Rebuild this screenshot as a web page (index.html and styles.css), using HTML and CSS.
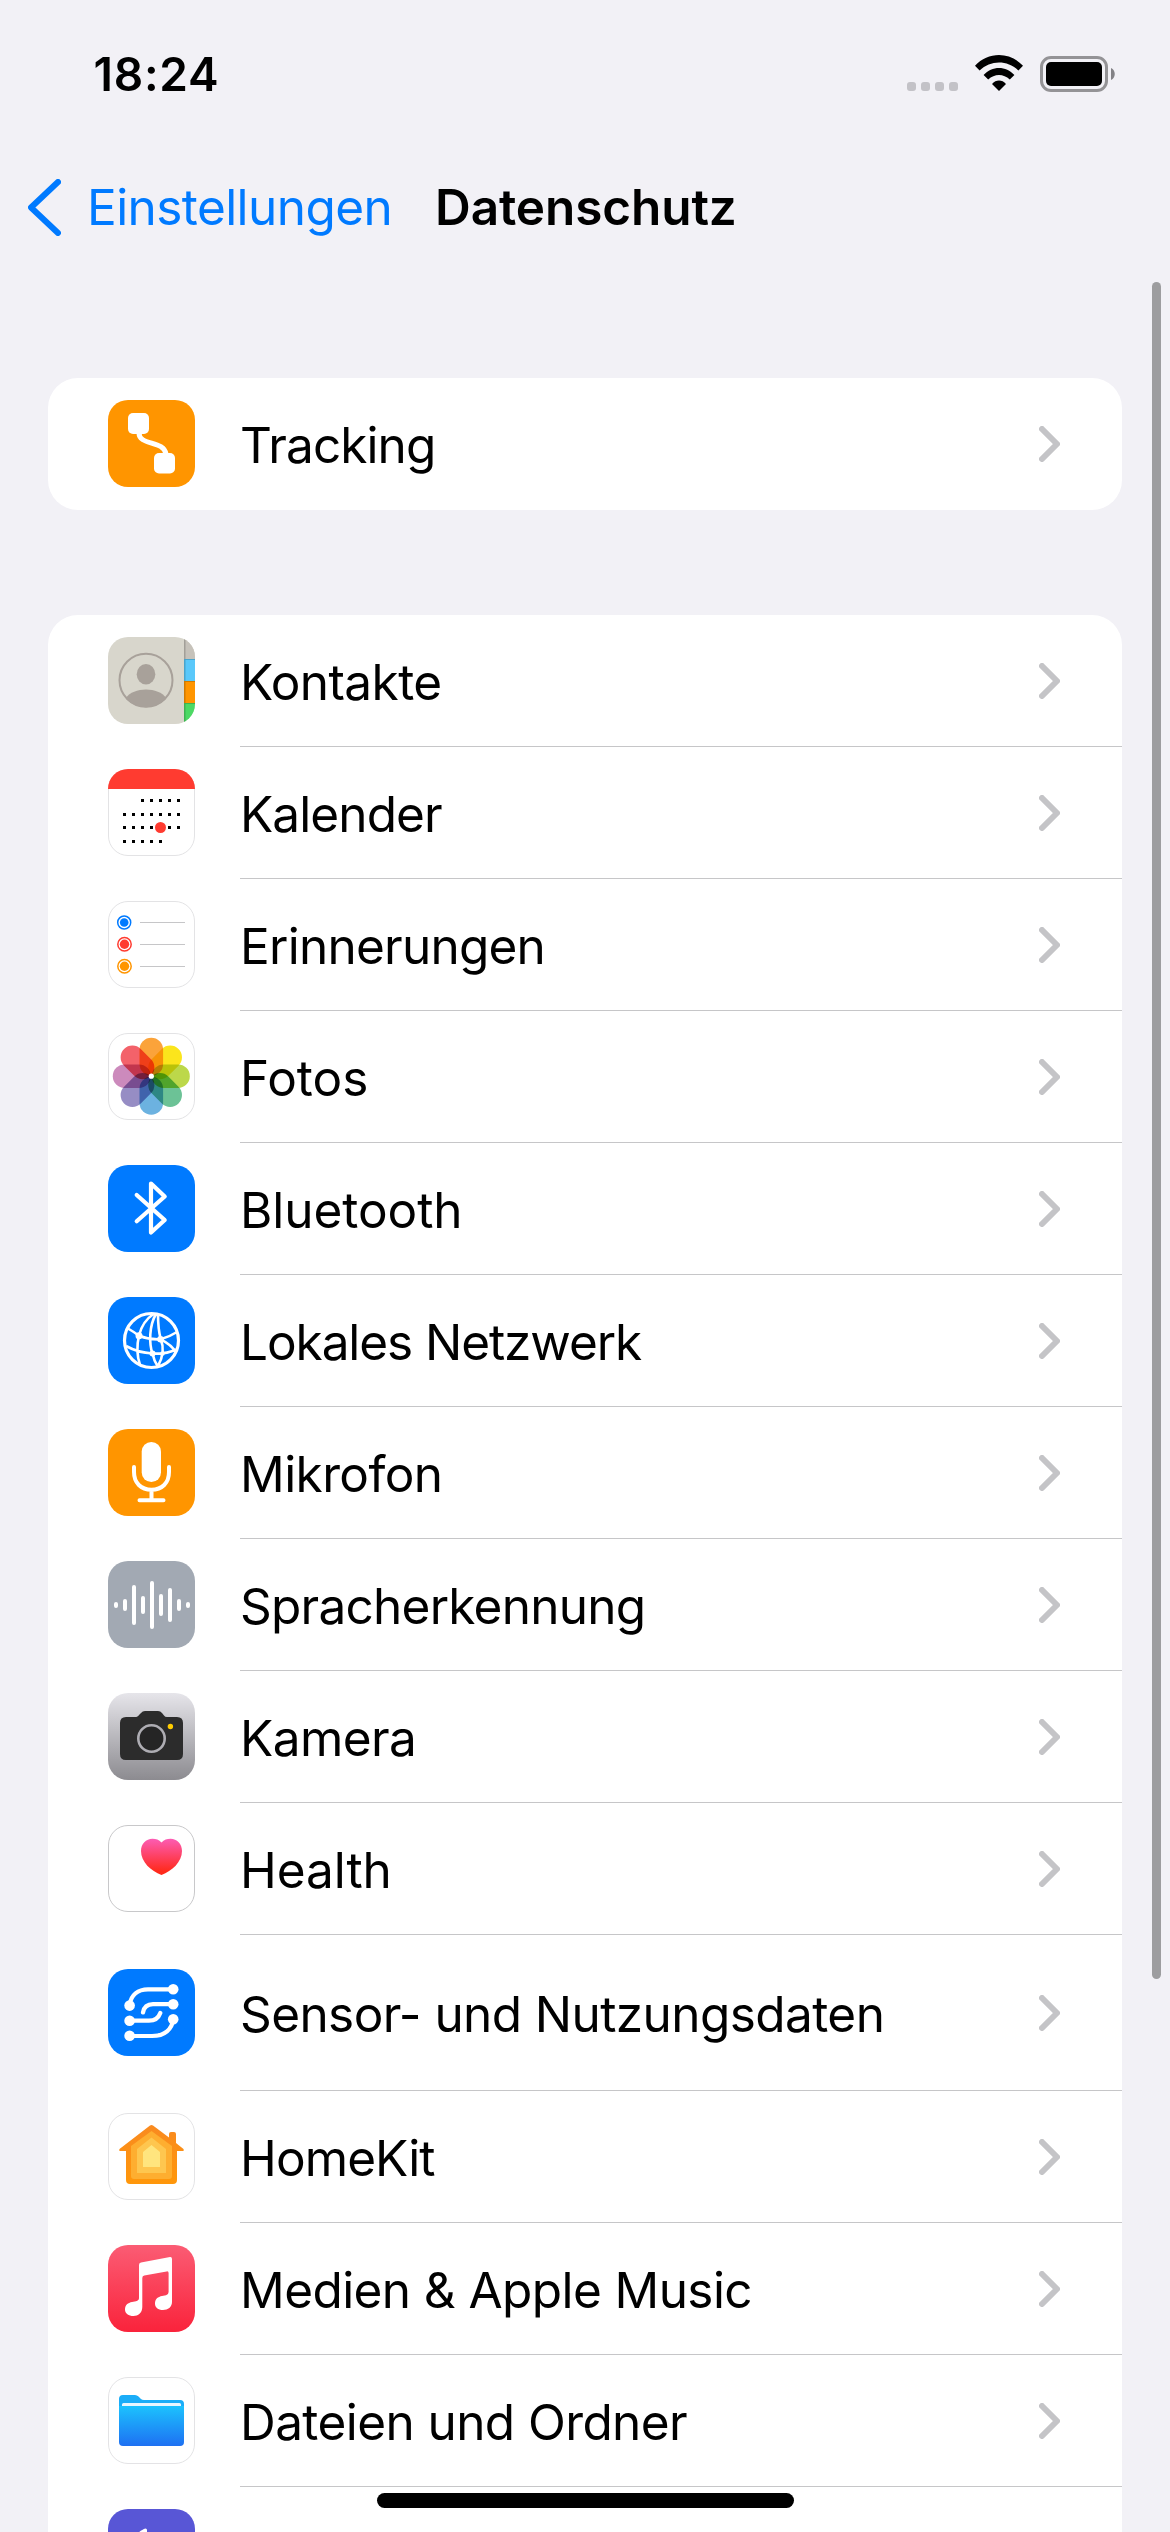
FILE: index.html
```html
<!DOCTYPE html>
<html lang="de">
<head>
<meta charset="utf-8">
<title>Datenschutz</title>
<link rel="stylesheet" href="styles.css">
</head>
<body>
<svg class="defs" width="0" height="0" aria-hidden="true">
  <defs>
    <symbol id="chevron" viewBox="0 0 21 36"><path d="M3 3 18 18 3 33" fill="none" stroke="#c4c4c7" stroke-width="6" stroke-linecap="round" stroke-linejoin="round"/></symbol>
    <clipPath id="tile"><rect width="87" height="87" rx="20"/></clipPath>
    <clipPath id="avatar"><circle cx="38" cy="43.3" r="27"/></clipPath>
    <linearGradient id="cam" x2="0" y2="1"><stop stop-color="#e6e5ea"/><stop offset="1" stop-color="#8c8b90"/></linearGradient>
    <linearGradient id="heart" x2="0" y2="1"><stop stop-color="#fc5cb4"/><stop offset=".9" stop-color="#ff2a1c"/></linearGradient>
    <linearGradient id="house" x2="0" y2="1"><stop stop-color="#f98a20"/><stop offset="1" stop-color="#ff970a"/></linearGradient>
    <linearGradient id="music" x2="0" y2="1"><stop stop-color="#fb5c74"/><stop offset="1" stop-color="#fa233b"/></linearGradient>
    <linearGradient id="folder" x2="0" y2="1"><stop stop-color="#1cc2fe"/><stop offset="1" stop-color="#1e70f2"/></linearGradient>
  </defs>
</svg>

<div class="screen">
  <header class="status">
    <span class="time">18:24</span>
    <div class="indicators">
      <span class="dots"><i></i><i></i><i></i><i></i></span>
      <svg class="wifi" width="48" height="36" viewBox="0 0 48 36">
        <path d="M0 10.8C13-3.6 35-3.6 48 10.8L43.4 15.5C32.5 4.8 15.500 4.800 4.600 15.500Z"/>
        <path d="M8.600 20C17 10.600 31 10.600 39.400 20L34.800 24.600C28.500 18.400 19.500 18.400 13.200 24.600Z"/>
        <path d="M17 29C21 24.400 27 24.400 31 29L24 36Z"/>
      </svg>
      <svg class="battery" width="75" height="36" viewBox="0 0 75 36">
        <rect x="1.500" y="1.500" width="65" height="33" rx="9.500" fill="none" stroke="#949396" stroke-width="3"/>
        <rect x="6" y="6" width="56" height="24" rx="5"/>
        <path d="M71 12C76 14 76 22 71 24Z" fill="#838286"/>
      </svg>
    </div>
  </header>

  <nav class="navbar">
    <svg width="33" height="57" viewBox="0 0 33 57"><path d="M30 3 3 28.500 30 54" fill="none" stroke="#007aff" stroke-width="6" stroke-linecap="round" stroke-linejoin="round"/></svg>
    <span class="back">Einstellungen</span>
    <h1>Datenschutz</h1>
  </nav>

  <main>
    <section class="card">
      <div class="row">
        <svg class="icon" viewBox="0 0 87 87"><rect width="87" height="87" rx="20" fill="#ff9500"/><g fill="#fff"><rect x="20" y="13" width="21" height="21" rx="5"/><rect x="46" y="53" width="21" height="20.500" rx="5"/></g><path d="M31 33C31 46 56 40 58 54" fill="none" stroke="#fff" stroke-width="5"/></svg>
        <div class="cell"><span class="label tight">Tracking</span><svg class="chev"><use href="#chevron"/></svg></div>
      </div>
    </section>

    <section class="card">
      <div class="row">
        <svg class="icon" viewBox="0 0 87 87"><g clip-path="url(#tile)"><rect width="87" height="87" fill="#d8d6cc"/><path fill="#c6c2ba" d="M76 0h11v22H76z"/><path fill="#5ac8fa" d="M76 22h11v22H76z"/><path fill="#ff9500" d="M76 44h11v22H76z"/><path fill="#4cd964" d="M76 66h11v21H76z"/><path d="M76 0h1.500v87H76zM76 22h11v1H76zM76 44h11v1H76zM76 66h11v1H76z" fill="#000" opacity=".18"/></g><circle cx="38" cy="43.300" r="26.500" fill="none" stroke="#a8a19a" stroke-width="2"/><ellipse cx="38" cy="37.300" rx="9.300" ry="10.300" fill="#a8a19a"/><path clip-path="url(#avatar)" d="M18 61C25 49.500 51 49.500 58 61V72H18Z" fill="#a8a19a"/></svg>
        <div class="cell"><span class="label">Kontakte</span><svg class="chev"><use href="#chevron"/></svg></div>
      </div>
      <div class="row">
        <svg class="icon" viewBox="0 0 87 87"><rect x=".5" y=".5" width="86" height="86" rx="19.500" fill="#fff" stroke="#e3e3e5"/><path clip-path="url(#tile)" fill="#ff3b30" d="M0 0h87v20H0z"/><g stroke="#000" stroke-width="3" stroke-dasharray="3 6"><path d="M33 31.500h39"/><path d="M15 45.500h57"/><path d="M15 58.500h57"/><path d="M15 72.500h39"/></g><circle cx="52.500" cy="58.500" r="5.500" fill="#ff3b30"/></svg>
        <div class="cell"><span class="label tight">Kalender</span><svg class="chev"><use href="#chevron"/></svg></div>
      </div>
      <div class="row">
        <svg class="icon" viewBox="0 0 87 87"><rect x=".5" y=".5" width="86" height="86" rx="19.500" fill="#fff" stroke="#e3e3e5"/><g stroke-width="1.500" fill="none"><circle cx="16.200" cy="21.500" r="6.500" stroke="#007aff"/><circle cx="16.500" cy="43.200" r="6.700" stroke="#ff3b30"/><circle cx="16.500" cy="65.200" r="6.700" stroke="#ff9500"/></g><circle cx="16.200" cy="21.500" r="4.300" fill="#007aff"/><circle cx="16.500" cy="43.200" r="4.700" fill="#ff3b30"/><circle cx="16.500" cy="65.200" r="4.700" fill="#ff9500"/><path d="M32 21.500h45M32 43.500h45M32 65.500h45" stroke="#c6c6c8"/></svg>
        <div class="cell"><span class="label snug">Erinnerungen</span><svg class="chev"><use href="#chevron"/></svg></div>
      </div>
      <div class="row">
        <svg class="icon" viewBox="0 0 87 87"><rect x=".5" y=".5" width="86" height="86" rx="19.500" fill="#fff" stroke="#e3e3e5"/>
          <g class="petals" transform="translate(43.300 43.200)">
            <rect x="-11.800" y="-38.500" width="23.600" height="38" rx="11.800" fill="#fba33a"/>
            <rect x="-11.800" y="-38.500" width="23.600" height="38" rx="11.800" fill="#fbe51c" transform="rotate(45)"/>
            <rect x="-11.800" y="-38.500" width="23.600" height="38" rx="11.800" fill="#bcd84a" transform="rotate(90)"/>
            <rect x="-11.800" y="-38.500" width="23.600" height="38" rx="11.800" fill="#6cc296" transform="rotate(135)"/>
            <rect x="-11.800" y="-38.500" width="23.600" height="38" rx="11.800" fill="#6cb2e0" transform="rotate(180)"/>
            <rect x="-11.800" y="-38.500" width="23.600" height="38" rx="11.800" fill="#968dc4" transform="rotate(225)"/>
            <rect x="-11.800" y="-38.500" width="23.600" height="38" rx="11.800" fill="#cc8abc" transform="rotate(270)"/>
            <rect x="-11.800" y="-38.500" width="23.600" height="38" rx="11.800" fill="#f3626a" transform="rotate(315)"/>
          </g><circle cx="43.300" cy="43.200" r="2.600" fill="#fff"/></svg>
        <div class="cell"><span class="label loose">Fotos</span><svg class="chev"><use href="#chevron"/></svg></div>
      </div>
      <div class="row">
        <svg class="icon" viewBox="0 0 87 87"><rect width="87" height="87" rx="20" fill="#007aff"/><path d="M28.700 30 56.700 55 43 67.500V18.500L56.700 31.500 28.700 56.200" fill="none" stroke="#fff" stroke-width="4.200" stroke-linecap="round" stroke-linejoin="round"/></svg>
        <div class="cell"><span class="label loose">Bluetooth</span><svg class="chev"><use href="#chevron"/></svg></div>
      </div>
      <div class="row">
        <svg class="icon" viewBox="0 0 87 87"><rect width="87" height="87" rx="20" fill="#007aff"/><g fill="none" stroke="#fff" stroke-width="2.600"><circle cx="43.500" cy="43.500" r="27" stroke-width="3.200"/><path d="M45.500 17C38 22 33 30 31 38.500M48 17C41 29 41 46 44.500 57M50 17C50 26 50.500 34 52.700 42M20 31.500Q26 35 31 38.700 42 43 52.700 42.300 61 40 69 35M18 49C27 54 36 56 44.500 56.500 54 57 61 56 68 52.500M31 38.500C28.500 49 29 59 32 68M52.700 42.300C60 46 65 50 67.500 55M52.700 42.300C56 50 55 60 50 69M44.500 56.500Q46 64 50 70"/></g><g fill="#fff"><circle cx="31" cy="38.700" r="3.500"/><circle cx="52.500" cy="42.300" r="3.300"/><circle cx="44.500" cy="56.500" r="3"/><circle cx="54.500" cy="56.500" r="2.300"/></g></svg>
        <div class="cell"><span class="label tighter">Lokales Netzwerk</span><svg class="chev"><use href="#chevron"/></svg></div>
      </div>
      <div class="row">
        <svg class="icon" viewBox="0 0 87 87"><rect width="87" height="87" rx="20" fill="#ff9500"/><rect x="33.700" y="13" width="19.300" height="40" rx="9.600" fill="#fff"/><path d="M26 38V43C26 54 33 60.700 43.500 60.700S61 54 61 43V38M43.500 61V71M31.500 71.300H55.500" fill="none" stroke="#fff" stroke-width="4" stroke-linecap="round"/></svg>
        <div class="cell"><span class="label">Mikrofon</span><svg class="chev"><use href="#chevron"/></svg></div>
      </div>
      <div class="row">
        <svg class="icon" viewBox="0 0 87 87"><rect width="87" height="87" rx="20" fill="#a2a9b3"/><path d="M8 43v2M17 40v8M26 26v36M35 37v14M44 22v44M53 35v18M62 29v30M71 40v8M80 43v2" stroke="#fff" stroke-width="4" stroke-linecap="round"/></svg>
        <div class="cell"><span class="label snug">Spracherkennung</span><svg class="chev"><use href="#chevron"/></svg></div>
      </div>
      <div class="row">
        <svg class="icon" viewBox="0 0 87 87"><rect width="87" height="87" rx="20" fill="url(#cam)"/><path d="M18 24H27C29 24 30 23.500 31 22L33 20Q34.500 18 37 18H50Q52.500 18 54 20L56 22.500Q57 24 59 24H69Q75 24 75 30V61Q75 67 69 67H18Q12 67 12 61V30Q12 24 18 24Z" fill="#2c2c2c"/><circle cx="43.500" cy="45.500" r="13.200" fill="#252525" stroke="#aeadb3" stroke-width="2.600"/><circle cx="62.400" cy="33.500" r="2.700" fill="#fc0"/></svg>
        <div class="cell"><span class="label">Kamera</span><svg class="chev"><use href="#chevron"/></svg></div>
      </div>
      <div class="row">
        <svg class="icon" viewBox="0 0 87 87"><rect x=".5" y=".5" width="86" height="86" rx="19.500" fill="#fff" stroke="#c8c8ca"/><path d="M53.500 17.500C56 14.800 59 13.800 62.500 13.800 69 13.800 74 19 74 26 74 37 64 46 53.500 50 43 46 33 37 33 26 33 19 38 13.800 44.500 13.800 48 13.800 51 14.800 53.500 17.500Z" fill="url(#heart)"/></svg>
        <div class="cell"><span class="label loose">Health</span><svg class="chev"><use href="#chevron"/></svg></div>
      </div>
      <div class="row tall">
        <svg class="icon" viewBox="0 0 87 87"><rect width="87" height="87" rx="20" fill="#007aff"/><path d="M21.500 36C23 26 30 20.300 40 20.300H65M35 43.500C36 38 39 35.200 45 35.200H65M21.500 51.700H41C47.500 51.700 50.500 49 52.300 44M21.500 67H44C57 67 64 60 65.200 50.500" fill="none" stroke="#fff" stroke-width="4.200" stroke-linecap="round"/><g fill="#fff"><circle cx="65.200" cy="20.200" r="5.300"/><circle cx="65.200" cy="35.200" r="5.300"/><circle cx="65.200" cy="50.300" r="5.300"/><circle cx="21.600" cy="36.600" r="5.300"/><circle cx="21.600" cy="51.700" r="5.300"/><circle cx="21.600" cy="66.800" r="5.300"/></g></svg>
        <div class="cell"><span class="label">Sensor- und Nutzungsdaten</span><svg class="chev"><use href="#chevron"/></svg></div>
      </div>
      <div class="row">
        <svg class="icon" viewBox="0 0 87 87"><rect x=".5" y=".5" width="86" height="86" rx="19.500" fill="#fff" stroke="#e3e3e5"/><path d="M42 12.500Q43.500 11.500 45 12.500L61 24.500V21Q61 19 63 19H66Q68 19 68 21V30L75.500 36Q76.500 38 75 38H69V67Q69 71 65 71H22Q18 71 18 67V38H12Q10.500 38 11.500 36Z" fill="url(#house)"/><path d="M43.500 18 64 33V63Q64 66 61 66H26Q23 66 23 63V33Z" fill="#feae30"/><path d="M43.500 24.500 58 36V60H29V36Z" fill="#fec64f"/><path d="M43.500 32 52 39V54H35V39Z" fill="#ffe57e"/></svg>
        <div class="cell"><span class="label tight">HomeKit</span><svg class="chev"><use href="#chevron"/></svg></div>
      </div>
      <div class="row">
        <svg class="icon" viewBox="0 0 87 87"><rect width="87" height="87" rx="20" fill="url(#music)"/><path d="M31 20Q31 18 33 17.600L62 12Q64 11.700 64 14V57C64 62 60 65 55 65 50 65 47 62.500 47 58.500 47 54 50 51.800 54 51L58 50.200Q60.600 49.600 60.600 47V28Q60.600 26 58.600 26.400L36.300 30.600Q34.300 31 34.300 33V62C34.300 68 30 71 25.500 71 20.500 71 17 68.500 17 64.500 17 60 20 57.800 24 57L28 56.200Q31 55.600 31 53Z" fill="#fff"/></svg>
        <div class="cell"><span class="label">Medien &amp; Apple Music</span><svg class="chev"><use href="#chevron"/></svg></div>
      </div>
      <div class="row">
        <svg class="icon" viewBox="0 0 87 87"><rect x=".5" y=".5" width="86" height="86" rx="19.500" fill="#fff" stroke="#e3e3e5"/><path d="M11 22Q11 18 15 18H27Q29 18 30.500 19.500L33 22Q34 23 36 23H72Q76 23 76 27V60H11Z" fill="#1badf8"/><rect x="14" y="26" width="59" height="5" rx="1.500" fill="#e8f6ff"/><path d="M11 29H76V65Q76 69 72 69H15Q11 69 11 65Z" fill="url(#folder)"/></svg>
        <div class="cell"><span class="label">Dateien und Ordner</span><svg class="chev"><use href="#chevron"/></svg></div>
      </div>
      <div class="row">
        <svg class="icon" viewBox="0 0 87 87"><rect width="87" height="87" rx="20" fill="#5856d6"/><path d="M28 26C31 23 34 20.500 37.500 19.500Q39 19.500 39 21V26Z" fill="#fff"/></svg>
        <div class="cell"></div>
      </div>
    </section>
  </main>

  <div class="scrollbar"></div>
  <div class="home-indicator"></div>
</div>
</body>
</html>
```
FILE: styles.css
```css
* { box-sizing: border-box; }

body {
  margin: 0;
  background: #f2f1f6;
  color: #000;
  font-family: Inter, "Liberation Sans", sans-serif;
}

svg { display: block; }

.defs { position: absolute; }

.screen {
  position: relative;
  width: 1170px;
  height: 2532px;
  overflow: hidden;
}

.status {
  display: flex;
  justify-content: space-between;
  height: 141px;
  padding: 46px 55px 0 93.500px;
}

.time {
  font-size: 46px;
  font-weight: 600;
  line-height: 57px;
  letter-spacing: .75px;
}

.indicators {
  display: flex;
  align-items: flex-start;
  padding-top: 9px;
}

.dots {
  display: flex;
  gap: 5px;
  margin: 27px 17px 0 0;
}

.dots i {
  width: 9px;
  height: 9px;
  border-radius: 3px;
  background: #c3c2c7;
}

.wifi { margin-right: 17px; }
.battery { margin-top: 1px; }

.navbar {
  display: flex;
  align-items: center;
  height: 132px;
  padding-left: 28px;
  font-size: 49.500px;
  line-height: 60px;
}

.back {
  width: 348px;
  padding-left: 26px;
  color: #007aff;
  letter-spacing: -.58px;
}

h1 {
  margin: 0 0 0 26px;
  font-size: inherit;
  font-weight: 600;
  letter-spacing: -.1px;
}

main {
  display: flex;
  flex-direction: column;
  gap: 105px;
  padding: 105px 48px 0;
}

.card {
  border-radius: 30px;
  background: #fff;
}

.row {
  display: flex;
  align-items: center;
  height: 132px;
  padding-left: 60px;
}

.row.tall { height: 156px; }

.icon {
  flex: none;
  width: 87px;
  height: 87px;
  margin: 0 45px 1px 0;
}

.cell {
  display: flex;
  flex: 1;
  align-items: center;
  justify-content: space-between;
  height: 100%;
  padding-right: 62px;
  border-bottom: 1px solid #c6c6c8;
}

.row:last-child .cell { border-bottom: 0; }

.label {
  padding-top: 2px;
  font-size: 49.500px;
  line-height: 60px;
  letter-spacing: -.58px;
  white-space: nowrap;
}

.label.snug { letter-spacing: -.75px; }
.label.tight { letter-spacing: -.9px; }
.label.tighter { letter-spacing: -1.070px; }
.label.loose { letter-spacing: -.050px; }

.chev {
  width: 21px;
  height: 36px;
}

.petals rect { mix-blend-mode: multiply; }

.scrollbar {
  position: absolute;
  top: 282px;
  right: 9px;
  width: 9px;
  height: 1697px;
  border-radius: 5px;
  background: #9d9d9f;
}

.home-indicator {
  position: absolute;
  bottom: 24px;
  left: 377px;
  width: 417px;
  height: 15px;
  border-radius: 8px;
  background: #000;
}
```
